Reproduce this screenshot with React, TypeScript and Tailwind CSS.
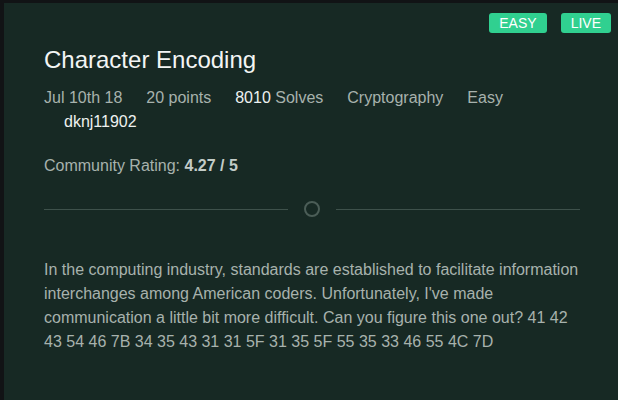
export default function App() {
  const meta = ['Jul 10th 18', '20 points'];

  return (
    <div className="min-h-[400px] w-[618px] bg-[#111315] pl-[4px] pt-[3px] font-['Liberation_Sans',Arial,sans-serif]">
      <div className="h-[397px] bg-[#172924] pl-10 pr-[7px]">
        <div className="flex justify-end gap-[14px] pt-[10px]">
          <span className="flex h-5 items-center rounded-[3px] bg-[#30d090] px-[10px] text-sm text-white">EASY</span>
          <span className="flex h-5 items-center rounded-[3px] bg-[#30d090] px-[10px] text-sm text-white">LIVE</span>
        </div>

        <div className="w-[536px]">
          <h1 className="mt-[13px] text-[24px] leading-[28px] text-[#f3f5f4]">Character Encoding</h1>

          <div className="mt-3 flex flex-wrap text-base leading-6 text-[#a7b2ad]">
            {meta.map((m) => (
              <span key={m} className="mr-6">{m}</span>
            ))}
            <span className="mr-6">
              <span className="text-[#eef1f0]">8010</span> Solves
            </span>
            <span className="mr-6">Cryptography</span>
            <span className="mr-6">Easy</span>
            <span className="mr-6 pl-5 text-[#eef1f0]">dknj11902</span>
          </div>

          <p className="mt-5 text-base leading-6 text-[#a7b2ad]">
            Community Rating: <b className="text-[#c3ccc8]">4.27 / 5</b>
          </p>

          <div className="mt-[23px] flex items-center">
            <div className="h-px flex-1 bg-[#3e514b]" />
            <div className="mx-4 h-4 w-4 rounded-full border-2 border-[#4b5d57]" />
            <div className="h-px flex-1 bg-[#3e514b]" />
          </div>

          <p className="mt-[41px] text-base leading-6 text-[#a7b2ad]">
            In the computing industry, standards are established to facilitate information interchanges among American coders. Unfortunately, I've made communication a little bit more difficult. Can you figure this one out? 41 42 43 54 46 7B 34 35 43 31 31 5F 31 35 5F 55 35 33 46 55 4C 7D
          </p>
        </div>
      </div>
    </div>
  );
}
